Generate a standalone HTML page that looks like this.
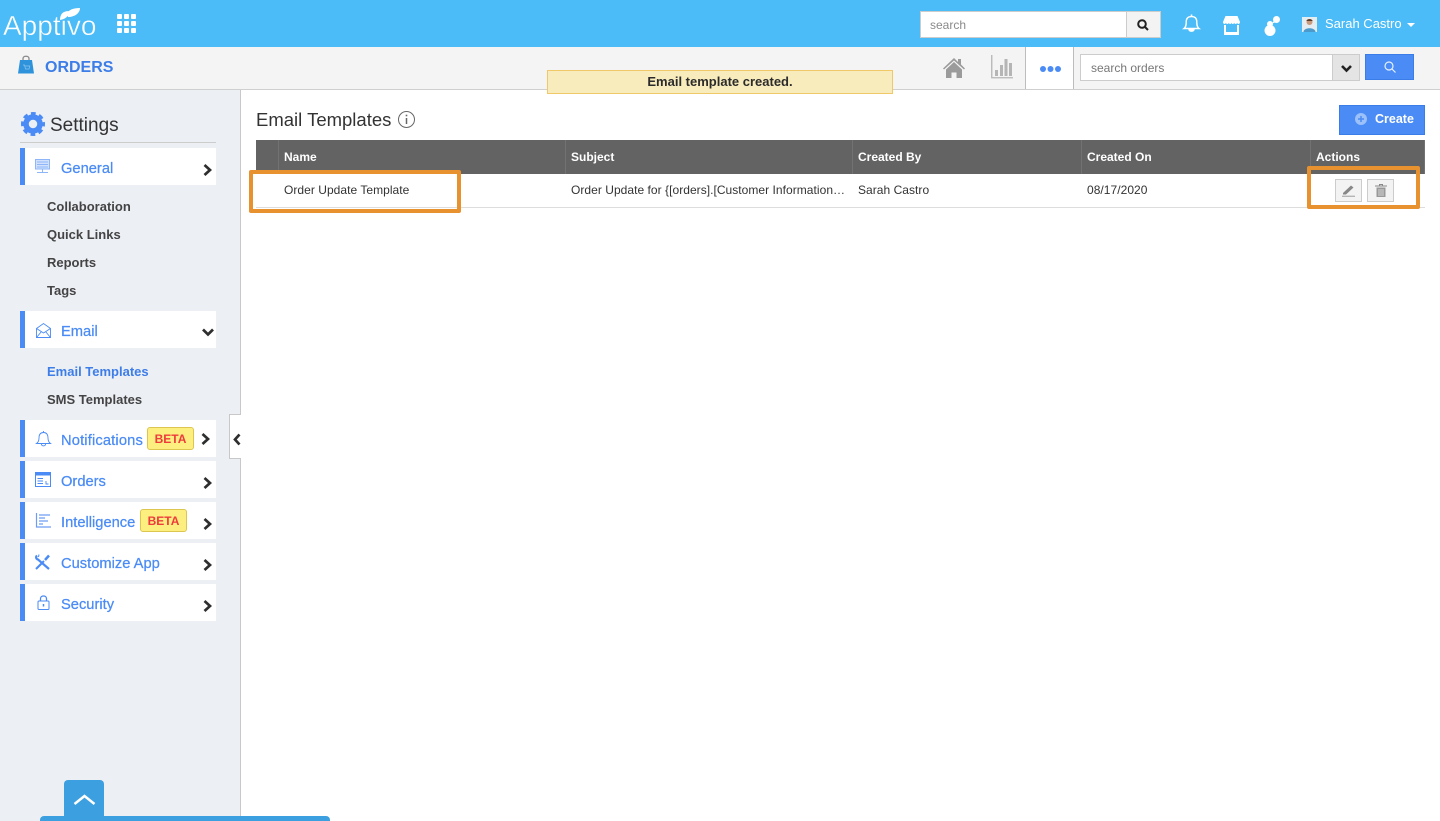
<!DOCTYPE html>
<html><head><meta charset="utf-8"><title>Email Templates</title>
<style>
*{box-sizing:border-box}
html,body{margin:0;padding:0;width:1440px;height:821px;overflow:hidden;background:#fff;font-family:"Liberation Sans",sans-serif;color:#333}
.a{position:absolute}
.t{position:absolute;white-space:nowrap}
.item{position:absolute;left:20px;width:196px;height:37px;background:#fff;border-left:5px solid #4a8bf5}
.lab{position:absolute;left:61px;font-size:14.7px;color:#4a8bf5;white-space:nowrap;-webkit-text-stroke:.25px #4a8bf5;line-height:16px;margin-top:1px}
.sub{position:absolute;left:47px;font-size:13px;font-weight:bold;color:#444;white-space:nowrap;line-height:15px}
.th{position:absolute;top:150px;font-size:12px;font-weight:bold;color:#fff;line-height:14px;white-space:nowrap}
.td{position:absolute;top:183px;font-size:12px;color:#333;line-height:14px;white-space:nowrap;letter-spacing:.04px}
.div{position:absolute;top:140px;width:1px;height:34px;background:#727272}
.beta{position:absolute;width:47px;height:23px;background:#fdee80;border:1px solid #dcc650;border-radius:3px;color:#ee3b3b;font-size:12px;font-weight:bold;text-align:center;line-height:22px}
svg{position:absolute;overflow:visible}
</style></head><body>

<div class="a" style="left:0;top:0;width:1440px;height:47px;background:#4bbcf7"></div>
<div class="t" style="left:3px;top:10px;font-size:28px;line-height:32px;color:#fff;-webkit-text-stroke:.4px #4bbcf7">Apptivo</div>
<svg style="left:0;top:0" width="100" height="47"><path d="M60 20C60 14 63 11 69 11C69 16 66 19 60 20ZM67 14C68 10 73 8 80 8C80 13 75 17 68 17Z" fill="#fff"/></svg>
<svg style="left:117px;top:14px" width="19" height="19" fill="#fff"><rect width="5" height="5" rx="1"/><rect x="7" width="5" height="5" rx="1"/><rect x="14" width="5" height="5" rx="1"/><rect y="7" width="5" height="5" rx="1"/><rect x="7" y="7" width="5" height="5" rx="1"/><rect x="14" y="7" width="5" height="5" rx="1"/><rect y="14" width="5" height="5" rx="1"/><rect x="7" y="14" width="5" height="5" rx="1"/><rect x="14" y="14" width="5" height="5" rx="1"/></svg>

<div class="a" style="left:920px;top:11px;width:207px;height:27px;background:#fff;border:1px solid #ccc"></div>
<div class="t" style="left:930px;top:18px;font-size:12px;line-height:14px;color:#8a8a8a">search</div>
<div class="a" style="left:1126px;top:11px;width:35px;height:27px;background:#f3f3f3;border:1px solid #ccc"></div>
<svg style="left:1137px;top:19px" width="12" height="12" fill="none" stroke="#222" stroke-width="2"><circle cx="5" cy="5" r="3.8"/><path d="M8 8l3 3"/></svg>

<svg style="left:1183px;top:14px" width="17" height="19" fill="none" stroke="#fff" stroke-width="1.4"><path d="M1 14.500C3 13 3.200 11 3.200 8C3.200 4.500 5 2.600 8.500 2.600C12 2.600 13.800 4.500 13.800 8C13.800 11 14 13 16 14.500Z"/><path d="M8.500 .5V2.500" stroke-width="1.600"/><path d="M6 15.500C6 17.800 11 17.800 11 15.500Z" fill="#fff"/></svg>
<svg style="left:1223px;top:15px" width="17" height="20" fill="#fff"><path d="M2.500 1H14.500L17 7C17 9.500 14 9.500 14.200 7.500C14 9.500 11 9.500 11.300 7.500C11 9.500 8.500 9.500 8.500 7.500C8.500 9.500 6 9.500 5.700 7.500C6 9.500 3 9.500 2.800 7.500C3 9.500 0 9.500 0 7Z"/><path d="M1 10H3V17H14V10H16V20H1Z"/></svg>
<svg style="left:1262px;top:15px" width="20" height="21" fill="#fff"><circle cx="14.500" cy="4.500" r="3.500"/><path d="M10 8.500l2-3 1 2z"/><circle cx="8" cy="9" r="3"/><circle cx="8" cy="15.500" r="5.500"/></svg>
<div class="a" style="left:1302px;top:17px;width:15px;height:15px;background:#e4edf2"></div>
<svg style="left:1302px;top:17px" width="15" height="15"><circle cx="7.500" cy="5" r="3" fill="#c99a7c"/><path d="M4.500 4C4.500 1.500 10.500 1.500 10.500 4Z" fill="#5b3a26"/><path d="M1.500 15C1.500 10 13.500 10 13.500 15Z" fill="#4a9acb"/></svg>
<div class="t" style="left:1325px;top:16px;font-size:13px;line-height:15px;color:#fff">Sarah Castro</div>
<svg style="left:1407px;top:23px" width="8" height="4"><path d="M0 0H8L4 4Z" fill="#fff"/></svg>

<div class="a" style="left:0;top:47px;width:1440px;height:43px;background:#f4f4f4;border-bottom:1px solid #cfcfcf"></div>
<svg style="left:18px;top:55px" width="16" height="19"><path d="M5 6V3.500C5 .5 11 .5 11 3.500V6" fill="none" stroke="#8a8a8a" stroke-width="1.300"/><path d="M2 5H14L16 18.500H0Z" fill="#2f93dc"/><path d="M5 10h1.500l1 4h3.500l.8-3H7" fill="none" stroke="#8cc6ef" stroke-width=".7"/></svg>
<div class="t" style="left:45px;top:59px;font-size:16px;font-weight:bold;line-height:18px;color:#3d7de8">ORDERS</div>
<svg style="left:943px;top:57px" width="22" height="22" fill="#9b9b9b"><path d="M11 1L0 11.500L1 12.500L11 3.500L21 12.500L22 11.500L18 7.500V2H15V5Z"/><path d="M3 12.500L11 5L19 12.500V21H13.500V15.500H8.500V21H3Z"/></svg>
<svg style="left:991px;top:55px" width="23" height="24"><path d="M.75 0V22.750H22" fill="none" stroke="#b5b5b5" stroke-width="1.300"/><rect x="4" y="15" width="3" height="6" fill="#b5b5b5"/><rect x="9" y="10" width="3" height="11" fill="#b5b5b5"/><rect x="13.500" y="4" width="3" height="17" fill="#b5b5b5"/><rect x="18" y="8" width="3" height="13" fill="#b5b5b5"/></svg>
<div class="a" style="left:1025px;top:47px;width:49px;height:42px;background:#fff;border-left:1px solid #bdbdbd;border-right:1px solid #bdbdbd"></div>
<svg style="left:1040px;top:66px" width="21" height="6" fill="#4a8bf5"><circle cx="3" cy="3" r="3"/><circle cx="10.500" cy="3" r="3"/><circle cx="18" cy="3" r="3"/></svg>
<div class="a" style="left:1080px;top:54px;width:253px;height:27px;background:#fff;border:1px solid #ccc"></div>
<div class="t" style="left:1091px;top:61px;font-size:12px;line-height:14px;color:#777">search orders</div>
<div class="a" style="left:1332px;top:54px;width:28px;height:27px;background:#e4e4e4;border:1px solid #ccc"></div>
<svg style="left:1341px;top:65px" width="11" height="7"><path d="M1 1L5.500 5.500L10 1" fill="none" stroke="#222" stroke-width="2.600"/></svg>
<div class="a" style="left:1365px;top:54px;width:49px;height:26px;background:#4a8bf5;border:1px solid #3b7de8"></div>
<svg style="left:1384px;top:61px" width="12" height="12" fill="none" stroke="#e6f0ff" stroke-width="1.200"><circle cx="5" cy="5" r="4"/><path d="M8 8l3.500 3.500"/></svg>

<div class="a" style="left:547px;top:70px;width:346px;height:24px;background:#f9ecbc;border:1px solid #f0c868;text-align:center;font-size:13px;font-weight:bold;line-height:21px;color:#2b2b2b">Email template created.</div>

<div class="a" style="left:0;top:90px;width:241px;height:731px;background:#eceff4;border-right:1px solid #c8c8c8"></div>

<svg style="left:21px;top:112px" width="24" height="24" viewBox="0 0 24 24" fill="none"><circle cx="12" cy="12" r="7" stroke="#4a8bf5" stroke-width="5.500"/><circle cx="12" cy="12" r="10.300" stroke="#4a8bf5" stroke-width="3.400" stroke-dasharray="4.600 3.490" stroke-dashoffset="2.300"/></svg>
<div class="t" style="left:50px;top:115px;font-size:19px;line-height:22px;color:#333">Settings</div>
<div class="a" style="left:20px;top:142px;width:196px;height:1px;background:#ccc"></div>

<div class="item" style="top:148px"></div>
<svg style="left:35px;top:159px" width="16" height="15" fill="none" stroke="#8db5f7"><rect x=".5" y=".5" width="14" height="9.500" fill="#d3e2fc"/><path d="M2 3h11M2 5.500h11M2 8h11M7.500 10v3M2 13.500h11"/></svg>
<div class="lab" style="top:160px">General</div>
<svg style="left:203px;top:164px" width="9" height="12"><path d="M1.500 1L7 6L1.500 11" fill="none" stroke="#2e2e2e" stroke-width="2.700"/></svg>
<div class="sub" style="top:199px">Collaboration</div>
<div class="sub" style="top:227px">Quick Links</div>
<div class="sub" style="top:255px">Reports</div>
<div class="sub" style="top:283px">Tags</div>

<div class="item" style="top:311px"></div>
<svg style="left:36px;top:323px" width="15" height="15" fill="none" stroke="#4a8bf5" stroke-width=".9"><path d="M.5 5.500L7.500 .5L14.500 5.500V14.500H.5Z"/><path d="M.5 5.500L7.500 10L14.500 5.500M.5 14.500L5.500 8.500M14.500 14.500L9.500 8.500"/></svg>
<div class="lab" style="top:323px">Email</div>
<svg style="left:202px;top:328px" width="12" height="9"><path d="M1 1.500L6 6.500L11 1.500" fill="none" stroke="#2e2e2e" stroke-width="2.700"/></svg>
<div class="sub" style="top:364px;color:#3d7de8">Email Templates</div>
<div class="sub" style="top:392px">SMS Templates</div>

<div class="item" style="top:420px"></div>
<svg style="left:36px;top:431px" width="15" height="16" fill="none" stroke="#4a8bf5" stroke-width=".9"><path d="M.5 12.500C2 11.500 3 10 3 7C3 3.500 4.500 1.500 7.500 1.500C10.500 1.500 12 3.500 12 7C12 10 13 11.500 14.500 12.500Z"/><path d="M7.500 0V1.500M5.500 13C5.500 15.500 9.500 15.500 9.500 13"/></svg>
<div class="lab" style="top:432px;letter-spacing:.15px">Notifications</div>
<div class="beta" style="left:147px;top:427px">BETA</div>
<svg style="left:201px;top:433px" width="9" height="12"><path d="M1.500 1L7 6L1.500 11" fill="none" stroke="#2e2e2e" stroke-width="2.700"/></svg>

<div class="a" style="left:229px;top:414px;width:12px;height:45px;background:#fff;border:1px solid #c8c8c8;border-right:none"></div>
<svg style="left:233px;top:433px" width="8" height="13"><path d="M6.500 1.500L2 6.500L6.500 11.500" fill="none" stroke="#2e2e2e" stroke-width="2.700"/></svg>

<div class="item" style="top:461px"></div>
<svg style="left:35px;top:472px" width="16" height="15" fill="none" stroke="#4a8bf5"><rect x=".5" y=".5" width="15" height="14"/><rect x="0" y="0" width="16" height="3.500" fill="#4a8bf5" stroke="none"/><path d="M2.500 6.500H8M2.500 9H8M2.500 11.500H8M11 9v3h2.500" stroke-width=".9"/></svg>
<div class="lab" style="top:473px">Orders</div>
<svg style="left:203px;top:477px" width="9" height="12"><path d="M1.500 1L7 6L1.500 11" fill="none" stroke="#2e2e2e" stroke-width="2.700"/></svg>

<div class="item" style="top:502px"></div>
<svg style="left:36px;top:513px" width="15" height="14" fill="none" stroke="#6d9df2" stroke-width="1.200"><path d="M.5 0V14H15"/><path d="M3 2H14M3 5H9M3 8H12M3 11H7"/></svg>
<div class="lab" style="top:514px">Intelligence</div>
<div class="beta" style="left:140px;top:509px">BETA</div>
<svg style="left:203px;top:518px" width="9" height="12"><path d="M1.500 1L7 6L1.500 11" fill="none" stroke="#2e2e2e" stroke-width="2.700"/></svg>

<div class="item" style="top:543px"></div>
<svg style="left:35px;top:554px" width="16" height="16" fill="none" stroke="#4a8bf5"><path d="M2 1.500C.5 3 1 5 3 5.500L14 15" stroke-width="2.200"/><path d="M4 .5L3.500 3" stroke-width="1"/><path d="M1 15L9 7" stroke-width="2"/><path d="M10 6L14 1.500" stroke-width="2.500"/></svg>
<div class="lab" style="top:555px">Customize App</div>
<svg style="left:203px;top:559px" width="9" height="12"><path d="M1.500 1L7 6L1.500 11" fill="none" stroke="#2e2e2e" stroke-width="2.700"/></svg>

<div class="item" style="top:584px"></div>
<svg style="left:37px;top:595px" width="13" height="15" fill="none" stroke="#4a8bf5"><path d="M3.500 6V3.500C3.500 .2 9.500 .2 9.500 3.500V6" stroke-width="1.300"/><rect x="1" y="6" width="11" height="8.500" rx="1"/><path d="M6.500 9v2.500" stroke-width="1.500"/></svg>
<div class="lab" style="top:596px">Security</div>
<svg style="left:203px;top:600px" width="9" height="12"><path d="M1.500 1L7 6L1.500 11" fill="none" stroke="#2e2e2e" stroke-width="2.700"/></svg>

<div class="a" style="left:64px;top:780px;width:40px;height:38px;background:#3c9fe0;border-radius:4px 4px 0 0"></div>
<svg style="left:73px;top:794px" width="23" height="12"><path d="M1.500 10L11.500 2L21.500 10" fill="none" stroke="#fff" stroke-width="2.500"/></svg>
<div class="a" style="left:40px;top:816px;width:290px;height:5px;background:#3c9fe0;border-radius:4px 4px 0 0"></div>

<div class="t" style="left:256px;top:109px;font-size:18.5px;line-height:22px;color:#333">Email Templates</div>
<svg style="left:398px;top:111px" width="17" height="17" fill="none" stroke="#666"><circle cx="8.500" cy="8.500" r="8"/><path d="M8.500 7V13" stroke-width="1.500"/><path d="M8.500 3.700V5.300" stroke-width="1.600"/></svg>

<div class="a" style="left:1339px;top:105px;width:86px;height:30px;background:#4a8bf5;border:1px solid #3b7de8"></div>
<svg style="left:1355px;top:113px" width="12" height="12"><circle cx="6" cy="6" r="6" fill="#9cc0f9"/><path d="M6 3V9M3 6H9" stroke="#4a8bf5" stroke-width="1.500"/></svg>
<div class="t" style="left:1375px;top:112px;font-size:12.500px;font-weight:bold;line-height:15px;color:#fff">Create</div>

<div class="a" style="left:256px;top:140px;width:1169px;height:34px;background:#636363"></div>
<div class="div" style="left:278px"></div><div class="div" style="left:565px"></div><div class="div" style="left:852px"></div><div class="div" style="left:1081px"></div><div class="div" style="left:1310px"></div><div class="div" style="left:1424px"></div>
<div class="th" style="left:284px">Name</div>
<div class="th" style="left:571px">Subject</div>
<div class="th" style="left:858px">Created By</div>
<div class="th" style="left:1087px">Created On</div>
<div class="th" style="left:1316px">Actions</div>

<div class="a" style="left:256px;top:207px;width:1169px;height:1px;background:#ddd"></div>
<div class="td" style="left:284px">Order Update Template</div>
<div class="td" style="left:571px">Order Update for {[orders].[Customer Information…</div>
<div class="td" style="left:858px">Sarah Castro</div>
<div class="td" style="left:1087px">08/17/2020</div>

<div class="a" style="left:1335px;top:179px;width:27px;height:23px;background:#f3f3f3;border:1px solid #ccc"></div>
<svg style="left:1342px;top:184px" width="14" height="13"><path d="M1 9L9 1.500L11.500 3.500L4 10.500L1 10.500Z" fill="#888"/><path d="M0 12.250H13" stroke="#aaa" stroke-width="1.200"/></svg>
<div class="a" style="left:1367px;top:179px;width:27px;height:23px;background:#f3f3f3;border:1px solid #ccc"></div>
<svg style="left:1375px;top:184px" width="12" height="13"><path d="M0 2H12M4.500 2V.5H7.500V2" stroke="#888" fill="none"/><path d="M1.500 3.500H10.500V13H1.500Z" fill="#999"/><path d="M4 5V12M6 5V12M8 5V12" stroke="#eee" stroke-width=".7"/></svg>

<div class="a" style="left:249px;top:170px;width:212px;height:43px;border:4px solid #e8912f;border-radius:2px"></div>
<div class="a" style="left:1307px;top:166px;width:113px;height:43px;border:4px solid #e8912f;border-radius:2px"></div>

</body></html>
